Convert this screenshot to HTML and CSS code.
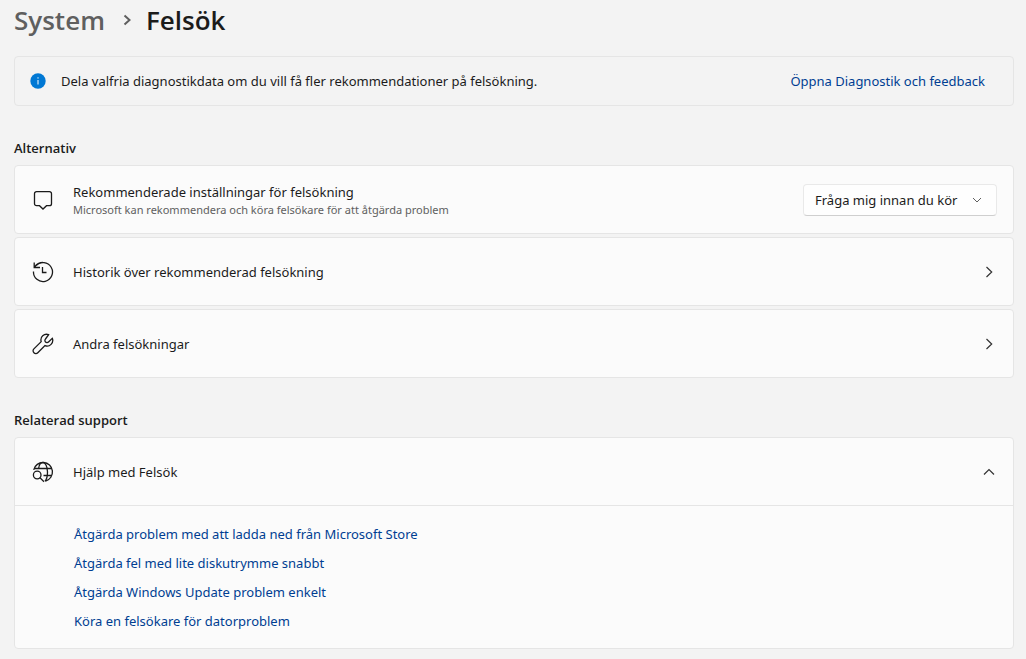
FILE: index.html
```html
<!DOCTYPE html>
<html lang="sv">
<head>
    <meta charset="UTF-8">
    <meta name="viewport" content="width=device-width, initial-scale=1.0">
    <title>Felsök</title>
    <link rel="stylesheet" href="styles.css">
</head>
<body>
    <header class="breadcrumb">
        <a class="breadcrumb-parent" href="#">System</a>
        <svg class="breadcrumb-arrow" width="10" height="12" viewBox="0 0 10 12"><path d="M2.500 1.500 7.500 6l-5 4.500"/></svg>
        <h1>Felsök</h1>
    </header>
    <main>
        <div class="banner">
            <svg class="info" width="16" height="16" viewBox="0 0 16 16">
                <circle cx="8" cy="8" r="7.700"/>
                <path d="M8 7v4.500M8 4.300v1.300"/>
            </svg>
            <p>Dela valfria diagnostikdata om du vill få fler rekommendationer på felsökning.</p>
            <a class="link" href="#">Öppna Diagnostik och feedback</a>
        </div>

        <section>
            <h2>Alternativ</h2>
            <div class="cards">
                <div class="card row">
                    <svg class="icon" width="22" height="22" viewBox="0 0 22 22"><path d="M4.500 2.700h13a2 2 0 0 1 2 2v10a2 2 0 0 1-2 2h-3L11 20l-3.500-3.300h-3a2 2 0 0 1-2-2v-10a2 2 0 0 1 2-2z"/></svg>
                    <div class="text">
                        <label for="recommended">Rekommenderade inställningar för felsökning</label>
                        <small>Microsoft kan rekommendera och köra felsökare för att åtgärda problem</small>
                    </div>
                    <div class="dropdown">
                        <select id="recommended">
                            <option>Fråga mig innan du kör</option>
                        </select>
                        <svg class="dropdown-arrow" width="10" height="6" viewBox="0 0 10 6"><path d="M1 1l4 4 4-4"/></svg>
                    </div>
                </div>
                <button class="card row" type="button">
                    <svg class="icon" width="22" height="22" viewBox="0 0 22 22"><path d="M1.500 10.500A9.500 9.500 0 1 0 4 4.600M2.200 1.500V6.500H8M2.400 6.300C4.600 3 7.500 1.500 11 1.500M10.500 6V11.500H14.500"/></svg>
                    <span class="text">Historik över rekommenderad felsökning</span>
                    <svg class="chevron" width="12" height="12" viewBox="0 0 12 12"><path d="M3.500 1 8.700 6l-5.200 5"/></svg>
                </button>
                <button class="card row" type="button">
                    <svg class="icon" width="22" height="22" viewBox="0 0 22 22"><path d="M16.600 1.700A5.600 5.600 0 0 0 9.200 8.600L1.900 15.900a2.700 2.700 0 0 0 0 3.900 2.700 2.700 0 0 0 3.900 0L13 12.600a5.600 5.600 0 0 0 7.300-7.300L16.500 9a2.100 2.100 0 0 1-3-3z"/></svg>
                    <span class="text">Andra felsökningar</span>
                    <svg class="chevron" width="12" height="12" viewBox="0 0 12 12"><path d="M3.500 1 8.700 6l-5.200 5"/></svg>
                </button>
            </div>
        </section>

        <section>
            <h2>Relaterad support</h2>
            <details class="card" open>
                <summary class="row">
                    <svg class="icon" width="22" height="22" viewBox="0 0 22 22">
                        <path d="M1.700 8.800A9.500 9.500 0 1 1 13.600 20.100M2.300 7.500H19.700M11.500 14.500H19.700"/>
                        <path d="M6.600 7.500C7 4 8.700 1.500 11 1.500s4.500 4 4.500 9.500-1.300 8-2.500 9.300"/>
                        <circle cx="5.200" cy="14" r="3.800"/>
                        <path d="M8 16.800 12 20.800"/>
                    </svg>
                    <span class="text">Hjälp med Felsök</span>
                    <svg class="chevron" width="12" height="12" viewBox="0 0 12 12"><path d="M1 8.500l5-5 5 5"/></svg>
                </summary>
                <ul>
                    <li><a class="link" href="#">Åtgärda problem med att ladda ned från Microsoft Store</a></li>
                    <li><a class="link" href="#">Åtgärda fel med lite diskutrymme snabbt</a></li>
                    <li><a class="link" href="#">Åtgärda Windows Update problem enkelt</a></li>
                    <li><a class="link" href="#">Köra en felsökare för datorproblem</a></li>
                </ul>
            </details>
        </section>
    </main>
</body>
</html>
```
FILE: styles.css
```css
* {
    box-sizing: border-box;
}
body {
    margin: 0;
    padding: 0 12px 10px 14px;
    background-color: #f3f3f3;
    color: #1b1b1b;
    font-family: "Segoe UI", "Noto Sans", sans-serif;
    font-size: 13px;
    line-height: 20px;
}
svg {
    flex: none;
    fill: none;
    stroke: #1b1b1b;
}
h1, h2, p, ul {
    margin: 0;
    padding: 0;
}

/* Sidhuvud */
.breadcrumb,
h2 {
    font-family: "Segoe UI", "Open Sans", sans-serif;
    font-weight: 600;
}
.breadcrumb {
    display: flex;
    align-items: center;
    height: 40px;
    font-size: 26px;
}
.breadcrumb-parent {
    color: #5f5f5f;
    text-decoration: none;
}
.breadcrumb-arrow {
    margin: 0 14px 0 17px;
    stroke: #5f5f5f;
    stroke-width: 2;
}
h1 {
    font-size: 26px;
    font-weight: 600;
}

.banner {
    display: flex;
    align-items: center;
    min-height: 50px;
    margin-top: 16px;
    padding: 0 28px 0 15px;
    border: 1px solid #e5e5e5;
    border-radius: 4px;
}
.banner p {
    flex: 1;
    margin-left: 15px;
}
.info circle {
    fill: #0078d4;
    stroke: none;
}
.info path {
    stroke: #fff;
    stroke-width: 1;
}
.link {
    color: #003e92;
    text-decoration: none;
}

/* Kort */
h2 {
    margin: 32px 0 7px;
    font-size: 13px;
}
.cards {
    display: flex;
    flex-direction: column;
    gap: 3px;
}
.card {
    border: 1px solid #e5e5e5;
    border-radius: 4px;
    background-color: #fbfbfb;
    color: inherit;
    font: inherit;
    text-align: left;
}
.row {
    display: flex;
    align-items: center;
    min-height: 69px;
    padding: 0 16px 0 17px;
}
.icon {
    margin-right: 19px;
    stroke-width: 1.3;
}
.text {
    flex: 1;
}
.text label,
.text small {
    display: block;
}
.text small {
    color: #606060;
    font-size: 11px;
    line-height: 16px;
}
.chevron {
    margin-right: 2px;
    stroke: #333;
    stroke-width: 1.2;
}
.dropdown {
    position: relative;
}
.dropdown select {
    appearance: none;
    width: 194px;
    height: 32px;
    padding: 0 34px 0 11px;
    border: 1px solid #e9e9e9;
    border-bottom-color: #cfcfcf;
    border-radius: 4px;
    background-color: #fefefe;
    color: inherit;
    font: inherit;
}
.dropdown-arrow {
    position: absolute;
    top: 13px;
    right: 15px;
    stroke: #606060;
    pointer-events: none;
}

/* Utfälld lista */
summary.row {
    min-height: 68px;
    border-bottom: 1px solid #e5e5e5;
    list-style: none;
}
details ul {
    padding: 14px 16px 12px 59px;
    list-style: none;
}
details li {
    line-height: 29px;
}
```
